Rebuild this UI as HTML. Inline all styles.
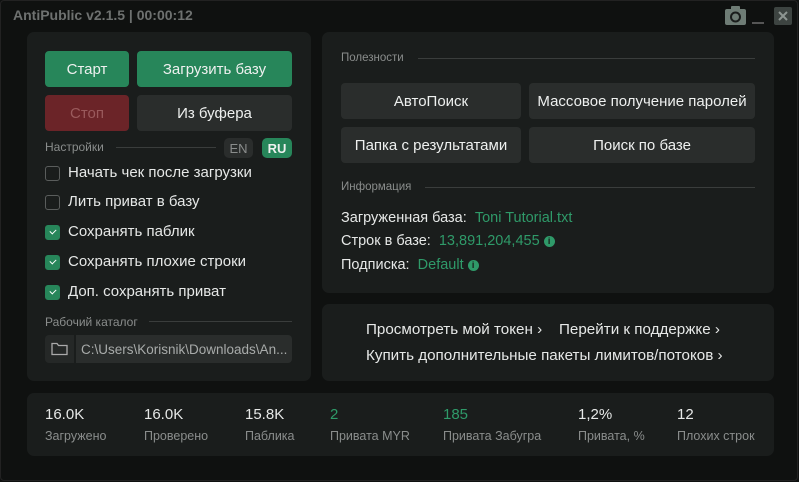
<!DOCTYPE html>
<html><head><meta charset="utf-8"><style>
*{margin:0;padding:0;box-sizing:border-box}
body{width:799px;height:482px;background:#0f1110;font-family:"Liberation Sans",sans-serif;color:#e6e8e7;position:relative;overflow:hidden}
.win{position:absolute;left:0;top:0;width:798px;height:481px;border:1px solid #222;border-radius:4px}
.a{position:absolute}
.p{position:absolute;background:#1a1d1c;border-radius:7px}
.b{position:absolute;border-radius:4px;display:flex;align-items:center;justify-content:center;font-size:15px;color:#eef0ef}
.g{background:#27865a}
.d{background:#2a2d2c}
.lab{position:absolute;font-size:12px;color:#8a8d8c}
.line{position:absolute;height:1px;background:#3a3d3c}
.cb{position:absolute;left:45px;width:15px;height:15px;border-radius:3px;border:1px solid #5a5d5c}
.cb.on{background:#27865a;border-color:#27865a}
.cb.on:after{content:"";position:absolute;left:4px;top:3px;width:5px;height:3px;border-left:1.5px solid #fff;border-bottom:1.5px solid #fff;transform:rotate(-45deg)}
.ct{position:absolute;left:68px;font-size:15px;color:#e6e8e7}
.t{position:absolute;font-size:14.5px;white-space:nowrap}
.gr{color:#2f9a69}
.n{position:absolute;font-size:15px;top:406px}
.l{position:absolute;font-size:12.5px;color:#8a8d8c;top:429px;white-space:nowrap}
.i{display:inline-block;width:11px;height:11px;border-radius:50%;background:#2f9a69;color:#1a1d1c;font-size:9px;font-weight:bold;text-align:center;line-height:11px;vertical-align:1px;margin-left:4px}
</style></head><body>
<div class="win"></div>
<div class="a" style="left:13px;top:7px;font-size:14px;font-weight:bold;color:#6e7170">AntiPublic v2.1.5 | 00:00:12</div>
<svg class="a" style="left:725px;top:6px" width="21" height="19"><rect x="0" y="3" width="21" height="16" rx="2" fill="#6e7c75"/><rect x="6" y="0" width="9" height="5" rx="1" fill="#6e7c75"/><circle cx="10.5" cy="11" r="4.5" fill="none" stroke="#1a1d1c" stroke-width="2"/></svg>
<div class="a" style="left:752px;top:22px;width:12px;height:2px;background:#555"></div>
<svg class="a" style="left:774px;top:7px" width="18" height="18"><rect width="18" height="18" rx="2" fill="#3d4441"/><path d="M5 5L13 13M13 5L5 13" stroke="#8d9591" stroke-width="2"/></svg>

<div class="p" style="left:27px;top:32px;width:284px;height:349px"></div>
<div class="b g" style="left:45px;top:51px;width:84px;height:36px">Старт</div>
<div class="b g" style="left:137px;top:51px;width:155px;height:36px">Загрузить базу</div>
<div class="b" style="left:45px;top:95px;width:84px;height:36px;background:#6b2428;color:#9a5a5c">Стоп</div>
<div class="b d" style="left:137px;top:95px;width:155px;height:36px">Из буфера</div>
<div class="lab" style="left:45px;top:140px">Настройки</div>
<div class="line" style="left:116px;top:147px;width:100px"></div>
<div class="b d" style="left:224px;top:138px;width:29px;height:20px;font-size:13px;color:#8a8d8c;border-radius:5px">EN</div>
<div class="b g" style="left:262px;top:138px;width:30px;height:20px;font-size:13px;font-weight:bold;border-radius:5px">RU</div>
<div class="cb" style="top:166px"></div><div class="ct" style="top:164px">Начать чек после загрузки</div>
<div class="cb" style="top:195px"></div><div class="ct" style="top:193px">Лить приват в базу</div>
<div class="cb on" style="top:225px"></div><div class="ct" style="top:223px">Сохранять паблик</div>
<div class="cb on" style="top:255px"></div><div class="ct" style="top:253px">Сохранять плохие строки</div>
<div class="cb on" style="top:285px"></div><div class="ct" style="top:283px">Доп. сохранять приват</div>
<div class="lab" style="left:45px;top:315px">Рабочий каталог</div>
<div class="line" style="left:149px;top:321px;width:143px"></div>
<div class="a" style="left:45px;top:335px;width:29px;height:28px;background:#252827;border-radius:4px 0 0 4px"></div>
<svg class="a" style="left:51px;top:341px" width="17" height="15"><path d="M1 2.5h5l1.5 2H16v9H1z" fill="none" stroke="#aaa" stroke-width="1.3"/></svg>
<div class="a" style="left:76px;top:335px;width:216px;height:28px;background:#2a2d2c;border-radius:0 4px 4px 0;font-size:13.5px;color:#a8abaa;padding:7px 0 0 5px;white-space:nowrap;overflow:hidden">C:\Users\Korisnik\Downloads\An...</div>

<div class="p" style="left:322px;top:32px;width:452px;height:261px"></div>
<div class="lab" style="left:341px;top:52px;font-size:11.5px">Полезности</div>
<div class="line" style="left:418px;top:58px;width:337px"></div>
<div class="b d" style="left:341px;top:83px;width:180px;height:36px">АвтоПоиск</div>
<div class="b d" style="left:529px;top:83px;width:226px;height:36px">Массовое получение паролей</div>
<div class="b d" style="left:341px;top:127px;width:180px;height:36px">Папка с результатами</div>
<div class="b d" style="left:529px;top:127px;width:226px;height:36px">Поиск по базе</div>
<div class="lab" style="left:341px;top:181px;font-size:11.5px">Информация</div>
<div class="line" style="left:425px;top:187px;width:330px"></div>
<div class="t" style="left:341px;top:210px">Загруженная база: &nbsp;<span class="gr">Toni Tutorial.txt</span></div>
<div class="t" style="left:341px;top:233px">Строк в базе: &nbsp;<span class="gr">13,891,204,455</span><span class="i">i</span></div>
<div class="t" style="left:341px;top:257px">Подписка: &nbsp;<span class="gr">Default</span><span class="i">i</span></div>

<div class="p" style="left:322px;top:304px;width:452px;height:77px"></div>
<div class="t" style="left:366px;top:321px;font-size:15.2px">Просмотреть мой токен ›</div>
<div class="t" style="left:559px;top:321px;font-size:15.2px">Перейти к поддержке ›</div>
<div class="t" style="left:366px;top:347px;font-size:15.2px">Купить дополнительные пакеты лимитов/потоков ›</div>

<div class="p" style="left:27px;top:393px;width:747px;height:63px"></div>
<div class="n" style="left:45px">16.0K</div><div class="l" style="left:45px">Загружено</div>
<div class="n" style="left:144px">16.0K</div><div class="l" style="left:144px">Проверено</div>
<div class="n" style="left:245px">15.8K</div><div class="l" style="left:245px">Паблика</div>
<div class="n gr" style="left:330px">2</div><div class="l" style="left:330px">Привата MYR</div>
<div class="n gr" style="left:443px">185</div><div class="l" style="left:443px">Привата Забугра</div>
<div class="n" style="left:578px">1,2%</div><div class="l" style="left:578px">Привата, %</div>
<div class="n" style="left:677px">12</div><div class="l" style="left:677px">Плохих строк</div>
</body></html>
